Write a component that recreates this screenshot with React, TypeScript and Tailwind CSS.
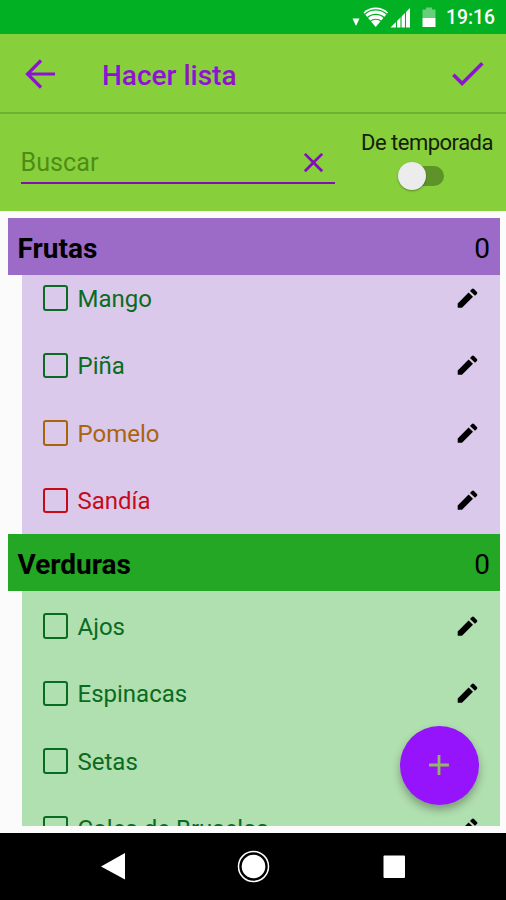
import { useState } from "react";
import { MdAdd, MdCheck, MdClose } from "react-icons/md";

type Item = { name: string; color: string };

const green = "text-[#0a6b22]";
const orange = "text-[#ab640d]";
const red = "text-[#c80a18]";

const fruits: Item[] = [
  { name: "Mango", color: green },
  { name: "Piña", color: green },
  { name: "Pomelo", color: orange },
  { name: "Sandía", color: red },
];

const vegetables: Item[] = [
  { name: "Ajos", color: green },
  { name: "Espinacas", color: green },
  { name: "Setas", color: green },
  { name: "Coles de Bruselas", color: green },
];

function StatusBar() {
  return (
    <div className="flex h-[34px] shrink-0 items-center justify-end bg-[#02b024] pr-[11px] text-white">
      <svg width="84" height="34" viewBox="0 0 84 34" fill="currentColor" className="mr-[10px]">
        <path d="M.5 18.500h7L4 26z" />
        {/* wifi */}
        <path d="M11.500 12.500a17.500 17.500 0 0 1 24.500 0L23.700 27z" />
        <g fill="none" stroke="#02b024" strokeWidth="1.200">
          <path d="M12.500 14.500a16 16 0 0 1 22.500 0" />
          <path d="M15 18a12.500 12.500 0 0 1 17.500 0" />
          <path d="M18 21.500a8.500 8.500 0 0 1 11.500 0" />
        </g>
        {/* signal */}
        <path d="M38.500 27.500 58 8v19.500z" />
        <path d="M44.500 16v12M49 12v16M53.500 8v20" stroke="#02b024" strokeWidth="1.100" />
        {/* battery */}
        <path d="M74 7.500h6v2h3.500V18h-13V9.500H74z" opacity="0.400" />
        <path d="M70.500 18h13v9h-13z" />
      </svg>
      <span className="pt-[2px] text-[19.300px] leading-none font-medium">19:16</span>
    </div>
  );
}

function BackIcon() {
  return (
    <svg width="30" height="30" viewBox="0 0 30 30" fill="none" stroke="currentColor" strokeWidth="3.200">
      <path d="M30 15H3M16 1.500 2.500 15 16 28.500" />
    </svg>
  );
}

function PencilIcon() {
  return (
    <svg width="22" height="22" viewBox="0 0 22 22" className="text-black">
      <path
        d="M.7 20.300v-3.900L11.600 5.400l4.400 4.400L5 20.800H1.200a.5.500 0 0 1-.5-.5zM13 4l1.900-1.900a1.500 1.500 0 0 1 2.100 0l2.900 2.900a1.500 1.500 0 0 1 0 2.100l-1.900 1.600z"
        fill="currentColor"
      />
    </svg>
  );
}

function Row({ item }: { item: Item }) {
  const [checked, setChecked] = useState(false);

  return (
    <li className={`flex h-[67.5px] shrink-0 items-center pr-[21px] pl-[20.5px] ${item.color}`}>
      <button
        onClick={() => setChecked(!checked)}
        aria-label={item.name}
        className="flex size-[25.5px] items-center justify-center rounded-[3px] border-[2.5px] border-current"
      >
        {checked && <MdCheck size={20} />}
      </button>
      <span className="ml-[9.5px] flex-1 pt-[2px] text-[24px] leading-8">{item.name}</span>
      <PencilIcon />
    </li>
  );
}

function SectionHeader({ title, className }: { title: string; className: string }) {
  return (
    <div className={`flex h-[57px] shrink-0 items-center justify-between pt-[4px] pr-[10px] pl-[9.5px] text-[28px] text-black ${className}`}>
      <h2 className="font-bold">{title}</h2>
      <span>0</span>
    </div>
  );
}

export default function App() {
  const [season, setSeason] = useState(false);

  return (
    <div className="flex h-[900px] w-[506px] flex-col overflow-hidden bg-[#fbfbfb] font-['Roboto',sans-serif]">
      <StatusBar />

      {/* App bar */}
      <header className="flex h-[80px] shrink-0 items-center border-b-2 border-[#70b12f] bg-[#87d03c] pr-[17px] pl-[25px] text-[#8e12d2]">
        <div className="pt-[1px]">
          <BackIcon />
        </div>
        <h1 className="ml-[47px] flex-1 pt-[5px] text-[28px] leading-8 font-medium">Hacer lista</h1>
        <MdCheck size={43} />
      </header>

      {/* Search */}
      <div className="flex h-[96.500px] shrink-0 bg-[#87d03c] pl-[20.500px]">
        <div className="mt-7 flex h-[42px] w-[314px] items-center border-b-[2px] border-[#7f10b4]">
          <span className="flex-1 pt-[2px] text-[25.200px] leading-8 text-[#4f8c16]">Buscar</span>
          <MdClose size={33} className="mr-[4.500px] text-[#7f10b4]" />
        </div>
        <div className="ml-[26.500px] flex flex-col items-start pt-[14px]">
          <span className="text-[22px] leading-[30px] tracking-[-0.5px] whitespace-nowrap text-[#14200a]">De temporada</span>
          <button
            role="switch"
            aria-checked={season}
            aria-label="De temporada"
            onClick={() => setSeason(!season)}
            className="mt-1 ml-[37px] flex h-7 w-[46px] items-center"
          >
            <span className="z-10 size-7 shrink-0 rounded-full bg-[#ececec] shadow-[0_1px_2px_rgba(0,0,0,0.35)]" />
            <span className="-ml-[14px] h-5 w-8 rounded-r-full bg-[#5e932a]" />
          </button>
        </div>
      </div>

      {/* List */}
      <main className="relative mt-[7.500px] flex h-[608px] shrink-0 flex-col pr-[6px] pl-2">
        <SectionHeader title="Frutas" className="bg-[#9b6bc7]" />
        <ul className="ml-[14px] flex h-[259px] shrink-0 flex-col justify-end overflow-hidden bg-[#dac9ea]">
          {fruits.map((item) => (
            <Row key={item.name} item={item} />
          ))}
        </ul>
        <SectionHeader title="Verduras" className="bg-[#24a724]" />
        <ul className="ml-[14px] flex h-[235px] shrink-0 flex-col overflow-hidden bg-[#b0dfb0] pt-[1px]">
          {vegetables.map((item) => (
            <Row key={item.name} item={item} />
          ))}
        </ul>
        <button
          aria-label="Añadir"
          className="absolute right-[27px] bottom-[21px] flex size-[79px] items-center justify-center rounded-full bg-[#9614fb] pr-[1px] pb-[1px] text-[#91b85e] shadow-[0_5px_8px_rgba(0,0,0,0.3)]"
        >
          <MdAdd size={34} />
        </button>
      </main>

      {/* Navigation bar */}
      <nav className="mt-auto h-[67px] shrink-0 bg-black">
        <svg width="506" height="67" viewBox="0 0 506 67" fill="white">
          <path d="M101 33.500 125 20v26.500z" />
          <circle cx="253.500" cy="33.500" r="11.800" />
          <circle cx="253.500" cy="33.500" r="15" fill="none" stroke="white" strokeWidth="1.500" />
          <rect x="383.500" y="22.500" width="21.500" height="22.500" rx="1" />
        </svg>
      </nav>
    </div>
  );
}
